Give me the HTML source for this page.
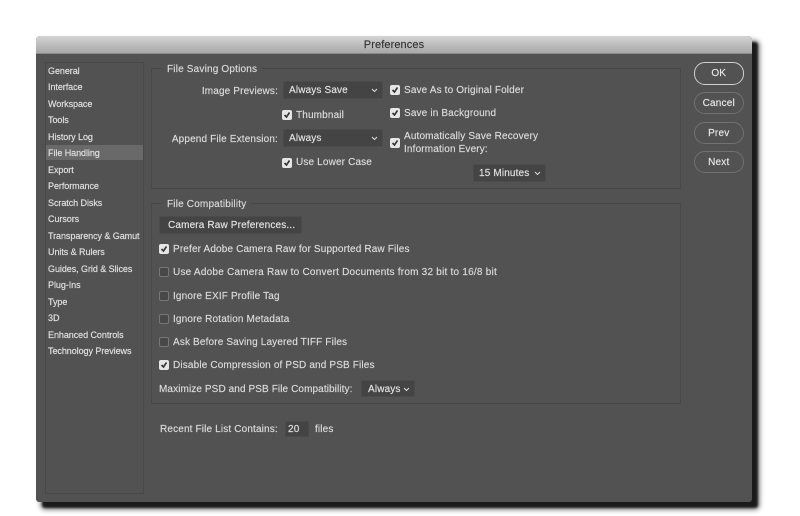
<!DOCTYPE html>
<html><head><meta charset="utf-8"><style>
html,body{margin:0;padding:0;background:#fff}
#p{position:relative;width:800px;height:516px;overflow:hidden;background:#fff;font-family:"Liberation Sans",sans-serif;color:#dcdcdc}
#p *{box-sizing:border-box}
#s1{position:absolute;left:42px;top:42px;width:716px;height:466px;background:#1a1a1a;border-radius:3px;box-shadow:0 0 4px 2px rgba(0,0,0,.45);filter:blur(1px)}
#w{position:absolute;left:36px;top:36px;width:716px;height:466px;background:#525252;border-radius:4px 4px 3px 3px;overflow:hidden}
#tb{position:absolute;left:36px;top:36px;width:716px;height:17.5px;background:linear-gradient(#d4d4d4,#a8a8a8);border-radius:4px 4px 0 0;border-bottom:1px solid #8a8a8a;text-align:center;color:#333;font-size:11px;line-height:18px;letter-spacing:.1px;-webkit-text-stroke:.15px #333;filter:blur(.3px)}
.t,.b,.g,.c,.sel,.leg{position:absolute}
#c{position:absolute;left:0;top:0;width:800px;height:516px;filter:blur(.35px);-webkit-text-stroke:.15px currentColor}
.t{white-space:nowrap;font-size:10px;line-height:12px;letter-spacing:.15px;margin-top:1.5px}
.n{font-size:9px;letter-spacing:-.06px;left:48px;line-height:12px;color:#e2e2e2;margin-top:0}
.g{border:1px solid #484848}
.leg{background:#525252;padding:0 5px;font-size:10px;line-height:12px;letter-spacing:.18px;white-space:nowrap}
.sel{background:#444;border:1px solid #4b4b4b;border-radius:2px;font-size:10px;letter-spacing:.15px;line-height:18px;padding-left:5px;white-space:nowrap;color:#e4e4e4}
.sel svg{position:absolute;right:4px;top:6px}
.c{width:10px;height:10px;border-radius:2px;border:1px solid #777;background:#484848}
.c.on{background:#e6e6e6;border-color:#e6e6e6}
.c svg{position:absolute;left:0;top:0}
.b{left:694px;width:49.5px;height:22px;border:1px solid #717171;border-radius:11px;text-align:center;font-size:10px;line-height:21.5px;letter-spacing:.2px;color:#e8e8e8}
</style></head><body><div id="p">
<div id="s1"></div>
<div id="w"></div>
<div id="tb">Preferences</div>
<div id="c">
<div class="g" style="left:44.5px;top:62px;width:99px;height:431.5px"></div>
<div style="position:absolute;left:45.5px;top:145px;width:97px;height:15px;background:#696969"></div>
<div class="t n" style="top:65px">General</div>
<div class="t n" style="top:81px">Interface</div>
<div class="t n" style="top:98px">Workspace</div>
<div class="t n" style="top:114px">Tools</div>
<div class="t n" style="top:131px">History Log</div>
<div class="t n" style="top:147px">File Handling</div>
<div class="t n" style="top:164px">Export</div>
<div class="t n" style="top:180px">Performance</div>
<div class="t n" style="top:197px">Scratch Disks</div>
<div class="t n" style="top:213px">Cursors</div>
<div class="t n" style="top:230px">Transparency &amp; Gamut</div>
<div class="t n" style="top:246px">Units &amp; Rulers</div>
<div class="t n" style="top:263px">Guides, Grid &amp; Slices</div>
<div class="t n" style="top:279px">Plug-Ins</div>
<div class="t n" style="top:296px">Type</div>
<div class="t n" style="top:312px">3D</div>
<div class="t n" style="top:329px">Enhanced Controls</div>
<div class="t n" style="top:345px">Technology Previews</div>

<div class="g" style="left:151px;top:68px;width:530px;height:120.5px"></div>
<div class="leg" style="left:162px;top:64px">File Saving Options</div>
<div class="t" style="right:522px;top:84px">Image Previews:</div>
<div class="sel" style="left:283px;top:81px;width:100px;height:18px">Always Save<svg width="7" height="5" viewBox="0 0 7 5"><path d="M1 1l2.5 2.5L6 1" fill="none" stroke="#ddd"/></svg></div>
<div class="c on" style="left:390px;top:85px"><svg width="8" height="8" viewBox="0 0 8 8"><path d="M1.5 4l2 2 3-4.5" fill="none" stroke="#333" stroke-width="1.6"/></svg></div>
<div class="t" style="left:404px;top:83px">Save As to Original Folder</div>
<div class="c on" style="left:282px;top:110px"><svg width="8" height="8" viewBox="0 0 8 8"><path d="M1.5 4l2 2 3-4.5" fill="none" stroke="#333" stroke-width="1.6"/></svg></div>
<div class="t" style="left:296px;top:108.5px">Thumbnail</div>
<div class="c on" style="left:390px;top:108px"><svg width="8" height="8" viewBox="0 0 8 8"><path d="M1.5 4l2 2 3-4.5" fill="none" stroke="#333" stroke-width="1.6"/></svg></div>
<div class="t" style="left:404px;top:106px">Save in Background</div>
<div class="t" style="right:522px;top:132px">Append File Extension:</div>
<div class="sel" style="left:283px;top:129px;width:100px;height:18px">Always<svg width="7" height="5" viewBox="0 0 7 5"><path d="M1 1l2.5 2.5L6 1" fill="none" stroke="#ddd"/></svg></div>
<div class="c on" style="left:390px;top:138px"><svg width="8" height="8" viewBox="0 0 8 8"><path d="M1.5 4l2 2 3-4.5" fill="none" stroke="#333" stroke-width="1.6"/></svg></div>
<div class="t" style="left:404px;top:129.5px">Automatically Save Recovery</div>
<div class="t" style="left:404px;top:142.5px">Information Every:</div>
<div class="c on" style="left:282px;top:158px"><svg width="8" height="8" viewBox="0 0 8 8"><path d="M1.5 4l2 2 3-4.5" fill="none" stroke="#333" stroke-width="1.6"/></svg></div>
<div class="t" style="left:296px;top:155.5px">Use Lower Case</div>
<div class="sel" style="left:473px;top:164px;width:72.5px;height:18px">15 Minutes<svg width="7" height="5" viewBox="0 0 7 5"><path d="M1 1l2.5 2.5L6 1" fill="none" stroke="#ddd"/></svg></div>

<div class="g" style="left:151px;top:203px;width:530px;height:201px"></div>
<div class="leg" style="left:162px;top:199px">File Compatibility</div>
<div class="sel" style="left:159px;top:216px;width:143px;height:18px;padding-left:8px">Camera Raw Preferences...</div>
<div class="c on" style="left:159px;top:244px"><svg width="8" height="8" viewBox="0 0 8 8"><path d="M1.5 4l2 2 3-4.5" fill="none" stroke="#333" stroke-width="1.6"/></svg></div>
<div class="t" style="left:173px;top:242.5px">Prefer Adobe Camera Raw for Supported Raw Files</div>
<div class="c" style="left:159px;top:267px"></div>
<div class="t" style="left:173px;top:265px;letter-spacing:.23px">Use Adobe Camera Raw to Convert Documents from 32 bit to 16/8 bit</div>
<div class="c" style="left:159px;top:290.5px"></div>
<div class="t" style="left:173px;top:289px">Ignore EXIF Profile Tag</div>
<div class="c" style="left:159px;top:313.5px"></div>
<div class="t" style="left:173px;top:312px">Ignore Rotation Metadata</div>
<div class="c" style="left:159px;top:336.5px"></div>
<div class="t" style="left:173px;top:335px">Ask Before Saving Layered TIFF Files</div>
<div class="c on" style="left:159px;top:360px"><svg width="8" height="8" viewBox="0 0 8 8"><path d="M1.5 4l2 2 3-4.5" fill="none" stroke="#333" stroke-width="1.6"/></svg></div>
<div class="t" style="left:173px;top:358px">Disable Compression of PSD and PSB Files</div>
<div class="t" style="left:159px;top:382px;letter-spacing:.1px">Maximize PSD and PSB File Compatibility:</div>
<div class="sel" style="left:361px;top:380px;width:53.5px;height:17px;padding-left:6px;line-height:17.5px">Always<svg width="7" height="5" viewBox="0 0 7 5"><path d="M1 1l2.5 2.5L6 1" fill="none" stroke="#ddd"/></svg></div>
<div class="t" style="left:160px;top:422.5px">Recent File List Contains:</div>
<div class="sel" style="left:285px;top:421px;width:24px;height:16px;padding-left:2px;line-height:15px;border-radius:1px">20</div>
<div class="t" style="left:315px;top:422.5px">files</div>

<div class="b" style="top:62px;border-color:#cfcfcf;height:22.5px">OK</div>
<div class="b" style="top:92px">Cancel</div>
<div class="b" style="top:122px">Prev</div>
<div class="b" style="top:151px;line-height:22px">Next</div>
</div>
</div></body></html>
